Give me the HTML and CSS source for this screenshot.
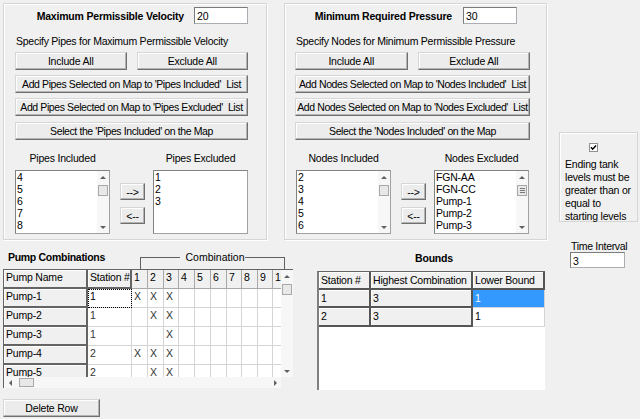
FILE: index.html
```html
<!DOCTYPE html>
<html>
<head>
  <title>Pump Optimization Settings</title>
  <link rel="stylesheet" href="styles.css">
</head>
<body>
  <div class="top">
    <div class="group group-pipes">
      <div class="title-row">
        <span class="title">Maximum Permissible Velocity</span>
        <input class="field field-title" type="text" value="20">
      </div>
      <div class="hint">Specify Pipes for Maximum Permissible Velocity</div>
      <div class="btn-pair">
        <button class="btn">Include All</button>
        <button class="btn">Exclude All</button>
      </div>
      <button class="btn btn-wide">Add Pipes Selected on Map to 'Pipes Included'&nbsp; List</button>
      <button class="btn btn-wide">Add Pipes Selected on Map to 'Pipes Excluded'&nbsp; List</button>
      <button class="btn btn-wide btn-last">Select the 'Pipes Included' on the Map</button>
      <div class="lists">
        <div class="list-col">
          <div class="list-label">Pipes Included</div>
          <div class="listbox">
            <div class="items">4<br>5<br>6<br>7<br>8</div>
            <div class="vscroll">
              <div class="arrow-box"><span class="arr-up"></span></div>
              <div class="track"><div class="thumb"></div></div>
              <div class="arrow-box"><span class="arr-down"></span></div>
            </div>
          </div>
        </div>
        <div class="movers">
          <button class="btn btn-move">--&gt;</button>
          <button class="btn btn-move">&lt;--</button>
        </div>
        <div class="list-col">
          <div class="list-label">Pipes Excluded</div>
          <div class="listbox">
            <div class="items">1<br>2<br>3</div>
          </div>
        </div>
      </div>
    </div>

    <div class="group group-nodes">
      <div class="title-row title-row-nodes">
        <span class="title">Minimum Required Pressure</span>
        <input class="field field-title" type="text" value="30">
      </div>
      <div class="hint">Specify Nodes for Minimum Permissible Pressure</div>
      <div class="btn-pair">
        <button class="btn">Include All</button>
        <button class="btn">Exclude All</button>
      </div>
      <button class="btn btn-wide">Add Nodes Selected on Map to 'Nodes Included'&nbsp; List</button>
      <button class="btn btn-wide">Add Nodes Selected on Map to 'Nodes Excluded'&nbsp; List</button>
      <button class="btn btn-wide btn-last">Select the 'Nodes Included' on the Map</button>
      <div class="lists lists-nodes">
        <div class="list-col">
          <div class="list-label">Nodes Included</div>
          <div class="listbox">
            <div class="items">2<br>3<br>4<br>5<br>6</div>
            <div class="vscroll">
              <div class="arrow-box"><span class="arr-up"></span></div>
              <div class="track"><div class="thumb"></div></div>
              <div class="arrow-box"><span class="arr-down"></span></div>
            </div>
          </div>
        </div>
        <div class="movers">
          <button class="btn btn-move">--&gt;</button>
          <button class="btn btn-move">&lt;--</button>
        </div>
        <div class="list-col">
          <div class="list-label">Nodes Excluded</div>
          <div class="listbox">
            <div class="items">FGN-AA<br>FGN-CC<br>Pump-1<br>Pump-2<br>Pump-3</div>
            <div class="vscroll">
              <div class="arrow-box"><span class="arr-up"></span></div>
              <div class="track"><div class="thumb thumb-grip"><span></span><span></span><span></span></div></div>
              <div class="arrow-box"><span class="arr-down"></span></div>
            </div>
          </div>
        </div>
      </div>
    </div>

    <div class="tank-box">
      <div class="check">
        <svg width="9" height="9" viewBox="0 0 9 9"><rect x="0.5" y="0.5" width="8" height="8" fill="#fff" stroke="#8e8f8f"/><path d="M2 4.3 L3.7 6.2 L7 2.6" fill="none" stroke="#000" stroke-width="1.5"/></svg>
      </div>
      <div class="tank-text">Ending tank levels must be greater than or equal to starting levels</div>
    </div>
  </div>

  <div class="bottom">
    <div class="pumps">
      <div class="pumps-head">
        <span class="section-title pumps-title">Pump Combinations</span>
        <div class="bracket"><span>Combination</span></div>
      </div>
      <div class="pump-frame">
        <div class="pump-area">
          <div class="pump-grid">
            <div class="ph ph-dark">Pump Name</div><div class="ph ph-dark">Station #</div>
            <div class="ph">1</div><div class="ph">2</div><div class="ph">3</div><div class="ph">4</div><div class="ph">5</div>
            <div class="ph">6</div><div class="ph">7</div><div class="ph">8</div><div class="ph">9</div><div class="ph">10</div>

            <div class="rh">Pump-1</div><div class="pc pc-focus">1</div>
            <div class="pc">X</div><div class="pc">X</div><div class="pc">X</div><div class="pc"></div><div class="pc"></div>
            <div class="pc"></div><div class="pc"></div><div class="pc"></div><div class="pc"></div><div class="pc"></div>

            <div class="rh">Pump-2</div><div class="pc">1</div>
            <div class="pc"></div><div class="pc">X</div><div class="pc">X</div><div class="pc"></div><div class="pc"></div>
            <div class="pc"></div><div class="pc"></div><div class="pc"></div><div class="pc"></div><div class="pc"></div>

            <div class="rh">Pump-3</div><div class="pc">1</div>
            <div class="pc"></div><div class="pc"></div><div class="pc">X</div><div class="pc"></div><div class="pc"></div>
            <div class="pc"></div><div class="pc"></div><div class="pc"></div><div class="pc"></div><div class="pc"></div>

            <div class="rh">Pump-4</div><div class="pc">2</div>
            <div class="pc">X</div><div class="pc">X</div><div class="pc">X</div><div class="pc"></div><div class="pc"></div>
            <div class="pc"></div><div class="pc"></div><div class="pc"></div><div class="pc"></div><div class="pc"></div>

            <div class="rh">Pump-5</div><div class="pc">2</div>
            <div class="pc"></div><div class="pc">X</div><div class="pc">X</div><div class="pc"></div><div class="pc"></div>
            <div class="pc"></div><div class="pc"></div><div class="pc"></div><div class="pc"></div><div class="pc"></div>
          </div>
        </div>
        <div class="vscroll vscroll-grid">
          <div class="arrow-box"><span class="arr-up"></span></div>
          <div class="track"><div class="thumb"></div></div>
          <div class="arrow-box"><span class="arr-down"></span></div>
        </div>
        <div class="hscroll">
          <div class="arrow-box-h"><span class="arr-left"></span></div>
          <div class="track-h"><div class="thumb-h"></div></div>
          <div class="arrow-box-h"><span class="arr-right"></span></div>
        </div>
        <div class="corner"></div>
      </div>
      <button class="btn btn-delete">Delete Row</button>
    </div>

    <div class="bounds">
      <div class="section-title bounds-title">Bounds</div>
      <div class="bounds-area">
        <div class="bounds-grid">
          <div class="bc">Station #</div><div class="bc">Highest Combination</div><div class="bc">Lower Bound</div>
          <div class="bc">1</div><div class="bc">3</div><div class="bv bv-selected">1</div>
          <div class="bc">2</div><div class="bc">3</div><div class="bv">1</div>
        </div>
      </div>
    </div>

    <div class="interval">
      <div class="interval-label">Time Interval</div>
      <input class="field field-interval" type="text" value="3">
    </div>
  </div>
</body>
</html>
```

FILE: styles.css
```css
* {
  box-sizing: border-box;
}

body {
  margin: 0;
  width: 640px;
  height: 419px;
  overflow: hidden;
  background-color: #f0f0f0;
  font-family: "Liberation Sans", Arial, sans-serif;
  font-size: 10.5px;
  letter-spacing: -0.2px;
  color: #000;
}

button,
input {
  font-family: inherit;
  font-size: inherit;
  letter-spacing: inherit;
  color: inherit;
  margin: 0;
}

/* ---------- top row ---------- */

.top {
  display: flex;
  align-items: flex-start;
  height: 240px;
  padding: 3px 0 0 3px;
}

.group {
  display: flex;
  flex-direction: column;
  width: 264px;
  height: 237px;
  padding: 0 18px 0 11px;
  border: 1px solid #d5d5d5;
  box-shadow: 1px 1px 0 #fff, inset 1px 1px 0 #fff;
}

.group-nodes {
  width: 263px;
  margin-left: 17px;
  padding: 0 16px 0 10px;
}

.title-row {
  display: flex;
  align-items: center;
  justify-content: flex-end;
  gap: 10px;
  margin-top: 3px;
}

.title-row-nodes {
  gap: 11px;
  padding-right: 13px;
}

.title {
  font-weight: bold;
}

.field {
  height: 17px;
  padding: 1px 2px 0;
  background: #fff;
  border: 1px solid #abadb3;
  border-top-color: #7a7a7a;
  border-left-color: #7a7a7a;
  outline: none;
}

.field-title {
  width: 54px;
}

.hint {
  margin-top: 11px;
  padding-left: 1px;
  line-height: 12px;
  letter-spacing: -0.25px;
}

.btn {
  height: 18px;
  padding: 0;
  background: #ececec;
  border: 1px solid #d6d6d6;
  border-right-color: #6f6f6f;
  border-bottom-color: #6f6f6f;
  box-shadow: inset -1px -1px 0 #b4b4b4, inset 1px 1px 0 #fff;
  line-height: 15px;
  text-align: center;
  white-space: nowrap;
}

.btn-pair {
  display: flex;
  gap: 10px;
  margin-top: 5px;
}

.btn-pair .btn {
  flex: 1;
}

.btn-wide {
  width: 100%;
  margin-top: 5px;
  letter-spacing: -0.4px;
}

.btn-last {
  margin-top: 6px;
}

/* ---------- list boxes ---------- */

.lists {
  display: flex;
  margin-top: 12px;
}

.lists-nodes {
  padding-left: 1px;
}

.list-col {
  width: 95px;
}

.list-label {
  line-height: 12px;
  text-align: center;
  margin-bottom: 6px;
}

.listbox {
  display: flex;
  height: 64px;
  background: #fff;
  border: 1px solid #a0a0a0;
  border-top-color: #828282;
  border-left-color: #828282;
}

.items {
  flex: 1;
  padding: 0 0 0 1px;
  line-height: 12px;
  overflow: hidden;
}

.vscroll {
  display: flex;
  flex-direction: column;
  width: 12px;
  background: #f7f7f7;
}

.arrow-box {
  display: flex;
  align-items: center;
  justify-content: center;
  height: 12px;
}

.track {
  flex: 1;
  padding: 2px 1px 0;
}

.thumb {
  height: 11px;
  background: #e8e8e8;
  border: 1px solid #a8a8a8;
}

.thumb-grip {
  display: flex;
  flex-direction: column;
  align-items: center;
  justify-content: center;
  gap: 1px;
}

.thumb-grip span {
  width: 5px;
  height: 1px;
  background: #7a7a7a;
}

.arr-up,
.arr-down,
.arr-left,
.arr-right {
  width: 0;
  height: 0;
  border: 3px solid transparent;
}

.arr-up {
  border-top-width: 0;
  border-bottom: 3px solid #606060;
}

.arr-down {
  border-bottom-width: 0;
  border-top: 3px solid #606060;
}

.arr-left {
  border-left-width: 0;
  border-right: 3px solid #606060;
}

.arr-right {
  border-right-width: 0;
  border-left: 3px solid #606060;
}

.movers {
  display: flex;
  flex-direction: column;
  gap: 7px;
  padding-top: 31px;
  margin: 0 8px 0 10px;
}

.btn-move {
  width: 25px;
  height: 17px;
  line-height: 14px;
}

/* ---------- tank checkbox ---------- */

.tank-box {
  width: 79px;
  height: 90px;
  margin: 129px 0 0 12px;
  padding: 10px 2px 0 5px;
  border: 1px solid #d5d5d5;
  box-shadow: inset 1px 1px 0 #fff;
}

.check {
  height: 9px;
  padding-left: 24px;
  line-height: 0;
}

.tank-text {
  margin-top: 6px;
  line-height: 13px;
}

/* ---------- bottom row ---------- */

.bottom {
  display: flex;
  align-items: flex-start;
  height: 179px;
}

.section-title {
  font-weight: bold;
  line-height: 12px;
}

.pumps {
  width: 290px;
  margin-left: 3px;
}

.pumps-head {
  display: flex;
  height: 29px;
}

.pumps-title {
  width: 137px;
  padding: 11px 0 0 5px;
  letter-spacing: -0.3px;
}

.bracket {
  display: flex;
  justify-content: center;
  width: 145px;
  height: 12px;
  margin-top: 17px;
  border: 1px solid #606060;
  border-bottom: none;
}

.bracket span {
  height: 12px;
  margin-top: -7px;
  padding: 0 1px 0 6px;
  line-height: 12px;
  letter-spacing: 0;
  background: #f0f0f0;
}

.pump-frame {
  display: grid;
  grid-template-columns: 278px 12px;
  grid-template-rows: 108px 11px;
}

.pump-area {
  overflow: hidden;
  background: #fff;
  border-top: 1px solid #646464;
  border-left: 1px solid #646464;
}

.pump-grid {
  display: grid;
  grid-template-columns: 84px 44px 16px 16px 15px 16px 16px 16px 15px 16px 15px 16px;
  grid-auto-rows: 19px;
  line-height: 15px;
}

.ph,
.rh,
.pc {
  padding-left: 2px;
  white-space: nowrap;
  overflow: hidden;
}

.ph {
  background: #f0f0f0;
  border-right: 1px solid #a8a8a8;
  border-bottom: 1px solid #a8a8a8;
}

.ph-dark {
  border-right: 2px solid #646464;
  border-bottom: 2px solid #646464;
  box-shadow: inset 1px 1px 0 #fff;
}

.rh {
  background: #f0f0f0;
  border-right: 2px solid #646464;
  border-bottom: 2px solid #646464;
  box-shadow: inset 1px 1px 0 #fff;
}

.pc {
  border-right: 1px solid #d4d4d4;
  border-bottom: 1px solid #d4d4d4;
  color: #333;
}

.pc-focus {
  outline: 1px dotted #000;
  outline-offset: -1px;
  color: #000;
}

.vscroll-grid {
  border-top: 1px solid #646464;
}

.hscroll {
  display: flex;
  background: #f7f7f7;
  border-left: 1px solid #646464;
}

.arrow-box-h {
  display: flex;
  align-items: center;
  justify-content: center;
  width: 12px;
}

.track-h {
  flex: 1;
  padding: 1px 0 0 3px;
}

.thumb-h {
  width: 15px;
  height: 9px;
  background: #e8e8e8;
  border: 1px solid #a8a8a8;
}

.corner {
  background: #f0f0f0;
}

.btn-delete {
  width: 97px;
  margin-top: 11px;
}

/* ---------- bounds ---------- */

.bounds {
  width: 228px;
  margin-left: 24px;
}

.bounds-title {
  padding-top: 12px;
  text-align: center;
  padding-left: 6px;
}

.bounds-area {
  height: 119px;
  margin-top: 7px;
  background: #fff;
  border-top: 1px solid #646464;
  border-left: 2px solid #808080;
}

.bounds-grid {
  display: grid;
  grid-template-columns: 52px 102px 72px;
  grid-template-rows: 18px 18px 19px;
  line-height: 16px;
}

.bc,
.bv {
  padding-left: 2px;
  white-space: nowrap;
}

.bc {
  background: #f0f0f0;
  border-right: 2px solid #555;
  border-bottom: 2px solid #555;
  box-shadow: inset 1px 1px 0 #fff;
}

.bv {
  border-right: 1px solid #d4d4d4;
  border-bottom: 1px solid #d4d4d4;
}

.bv-selected {
  background: #3399ff;
  color: #fff;
}

/* ---------- time interval ---------- */

.interval {
  width: 55px;
  margin-left: 25px;
}

.interval-label {
  padding-left: 1px;
  line-height: 12px;
  white-space: nowrap;
  letter-spacing: -0.3px;
}

.field-interval {
  width: 55px;
  height: 16px;
}
```
